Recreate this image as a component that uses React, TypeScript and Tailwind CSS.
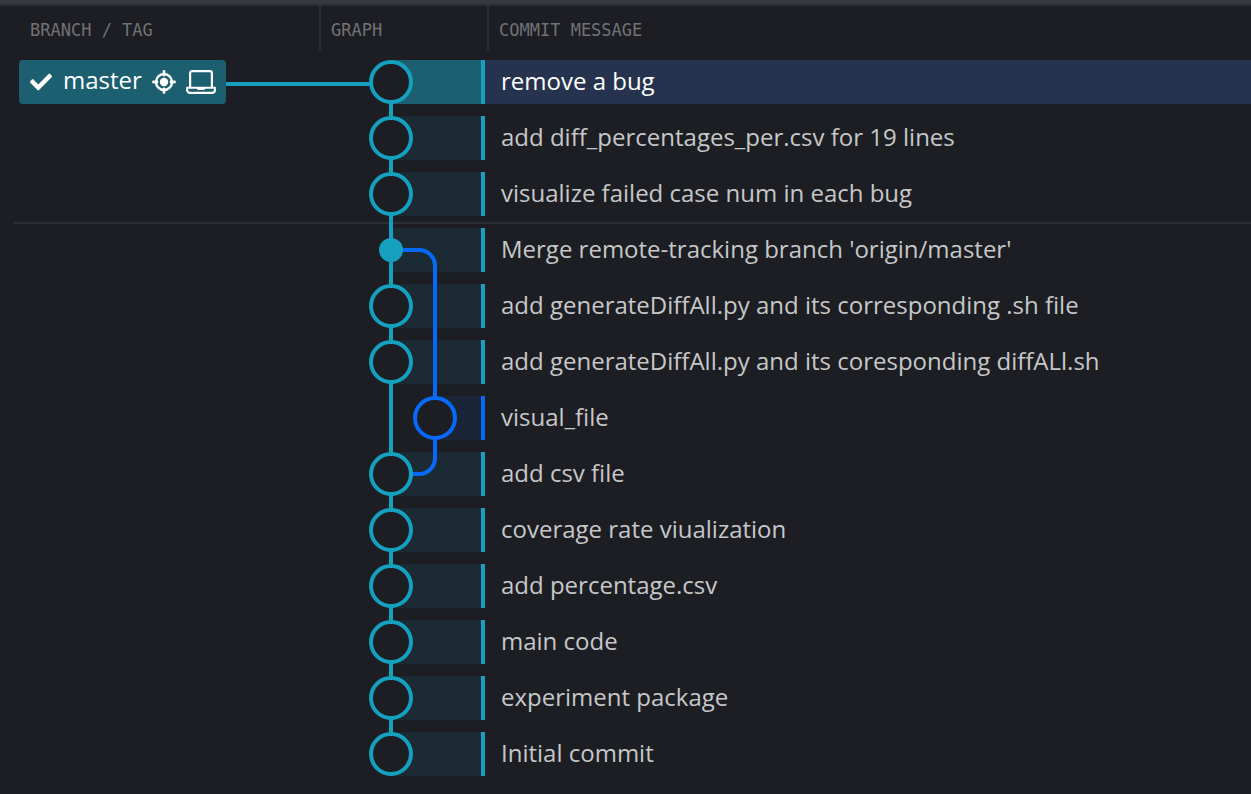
import { FaCheck } from "react-icons/fa";

type Lane = "teal" | "blue";

type Commit = {
  message: string;
  lane: Lane;
  branch?: string;
  merge?: boolean;
  divider?: boolean;
  edges: { d: string; lane: Lane }[];
};

const STROKE: Record<Lane, string> = { teal: "#15a0bf", blue: "#0669f7" };
const BAND: Record<Lane, string> = { teal: "#1c2b33", blue: "#1a2538" };
const LANE_X: Record<Lane, number> = { teal: 72, blue: 116 };

const through = { d: "M72 0V56", lane: "teal" as Lane };
const side = { d: "M116 0V56", lane: "blue" as Lane };

const commits: Commit[] = [
  {
    message: "remove a bug",
    lane: "teal",
    branch: "master",
    edges: [
      { d: "M0 30H72", lane: "teal" },
      { d: "M72 28V56", lane: "teal" },
    ],
  },
  { message: "add diff_percentages_per.csv for 19 lines", lane: "teal", edges: [through] },
  { message: "visualize failed case num in each bug", lane: "teal", edges: [through] },
  {
    message: "Merge remote-tracking branch 'origin/master'",
    lane: "teal",
    merge: true,
    divider: true,
    edges: [{ d: "M72 28H100A16 16 0 0 1 116 44V56", lane: "blue" }, through],
  },
  { message: "add generateDiffAll.py and its corresponding .sh file", lane: "teal", edges: [through, side] },
  { message: "add generateDiffAll.py and its coresponding diffALl.sh", lane: "teal", edges: [through, side] },
  { message: "visual_file", lane: "blue", edges: [through, side] },
  {
    message: "add csv file",
    lane: "teal",
    edges: [{ d: "M116 0V12A16 16 0 0 1 100 28H72", lane: "blue" }, through],
  },
  { message: "coverage rate viualization", lane: "teal", edges: [through] },
  { message: "add percentage.csv", lane: "teal", edges: [through] },
  { message: "main code", lane: "teal", edges: [through] },
  { message: "experiment package", lane: "teal", edges: [through] },
  { message: "Initial commit", lane: "teal", edges: [{ d: "M72 0V28", lane: "teal" }] },
];

function TargetIcon() {
  return (
    <svg width="24" height="24" viewBox="0 0 24 24" fill="none" stroke="currentColor" aria-hidden="true">
      <circle cx="12" cy="12" r="8" strokeWidth="2.4" />
      <circle cx="12" cy="12" r="4.2" fill="currentColor" stroke="none" />
      <path d="M12 1.4V5M12 19v3.6M1.4 12H5M19 12h3.6" strokeWidth="2.8" strokeLinecap="round" />
    </svg>
  );
}

function LaptopIcon() {
  return (
    <svg width="30" height="24" viewBox="0 0 30 24" fill="none" stroke="currentColor" aria-hidden="true">
      <path d="M4.1 17V3.2a2 2 0 0 1 2-2h17.800a2 2 0 0 1 2 2V17" strokeWidth="2.2" />
      <path d="M1.1 17.700H28.900v2.200a3 3 0 0 1-3 3H4.100a3 3 0 0 1-3-3z" strokeWidth="2.100" strokeLinejoin="round" />
      <path d="M10.500 18h9c-.2 1.300-.9 1.900-2 1.900h-5c-1.100 0-1.800-.6-2-1.900z" fill="currentColor" stroke="none" />
    </svg>
  );
}

function BranchLabel({ name }: { name: string }) {
  return (
    <div className="flex h-14 items-center pl-[6px]">
      <button
        type="button"
        className="flex h-11 items-center rounded-[4px] bg-[#1b5f70] pr-[10px] pl-[11px] text-[24px] leading-[40px] text-white"
      >
        <FaCheck className="mr-[11px] size-[22px]" aria-hidden="true" />
        <span className="mr-[10px] pb-[4px]">{name}</span>
        <span className="mr-[10px]">
          <TargetIcon />
        </span>
        <LaptopIcon />
      </button>
      <span className="mt-1 h-1 flex-1 bg-[#15a0bf]" />
    </div>
  );
}

function GraphCell({ commit }: { commit: Commit }) {
  const x = LANE_X[commit.lane];
  return (
    <svg className="block" width="166" height="56" viewBox="0 0 166 56" aria-hidden="true">
      <rect x={x} y="6" width={162 - x} height="44" fill={commit.branch ? "#1b5f70" : BAND[commit.lane]} />
      <rect x="162" y="6" width="4" height="44" fill={STROKE[commit.lane]} />
      {commit.edges.map((edge) => (
        <path key={edge.d} d={edge.d} fill="none" stroke={STROKE[edge.lane]} strokeWidth="4" />
      ))}
      {commit.merge ? (
        <circle cx={x} cy="28" r="12" fill={STROKE[commit.lane]} />
      ) : (
        <circle cx={x} cy="28" r="20" fill="#1d1e23" stroke={STROKE[commit.lane]} strokeWidth="4" />
      )}
    </svg>
  );
}

export default function App() {
  return (
    <main className="min-h-screen border-t-4 border-[#363942] bg-[#1d1e23] font-['Open_Sans',sans-serif]">
      <div className="border-t-2 border-[#2b2d34] pl-[13px]">
        <table className="w-full table-fixed border-collapse text-left">
          <colgroup>
            <col className="w-[306px]" />
            <col className="w-[166px]" />
            <col />
          </colgroup>
          <thead className="font-['DejaVu_Sans_Mono',monospace] text-[17px] leading-[44px] text-[#717276]">
            <tr className="h-12 align-top">
              <th scope="col" className="p-0 font-normal">
                <div className="h-11 pt-[2px] pl-[17px]">BRANCH / TAG</div>
              </th>
              <th scope="col" className="p-0 font-normal">
                <div className="h-11 border-l-2 border-[#2d2f35] pt-[2px] pl-[10px]">GRAPH</div>
              </th>
              <th scope="col" className="p-0 font-normal">
                <div className="ml-[2px] h-11 border-l-2 border-[#2d2f35] pt-[2px] pl-[10px]">COMMIT MESSAGE</div>
              </th>
            </tr>
          </thead>
          <tbody>
            {commits.map((commit) => (
              <tr key={commit.message} className={commit.divider ? "[&>td]:shadow-[inset_0_2px_#2d2f35]" : ""}>
                <td className="p-0">{commit.branch && <BranchLabel name={commit.branch} />}</td>
                <td className="p-0">
                  <GraphCell commit={commit} />
                </td>
                <td className="p-0">
                  <div
                    className={
                      commit.branch
                        ? "h-11 truncate bg-[#26334f] pl-4 text-[24px] leading-[42px] text-white"
                        : "h-11 truncate pl-4 text-[24px] leading-[42px] text-[#c6c7c9]"
                    }
                  >
                    {commit.message}
                  </div>
                </td>
              </tr>
            ))}
          </tbody>
        </table>
      </div>
    </main>
  );
}
